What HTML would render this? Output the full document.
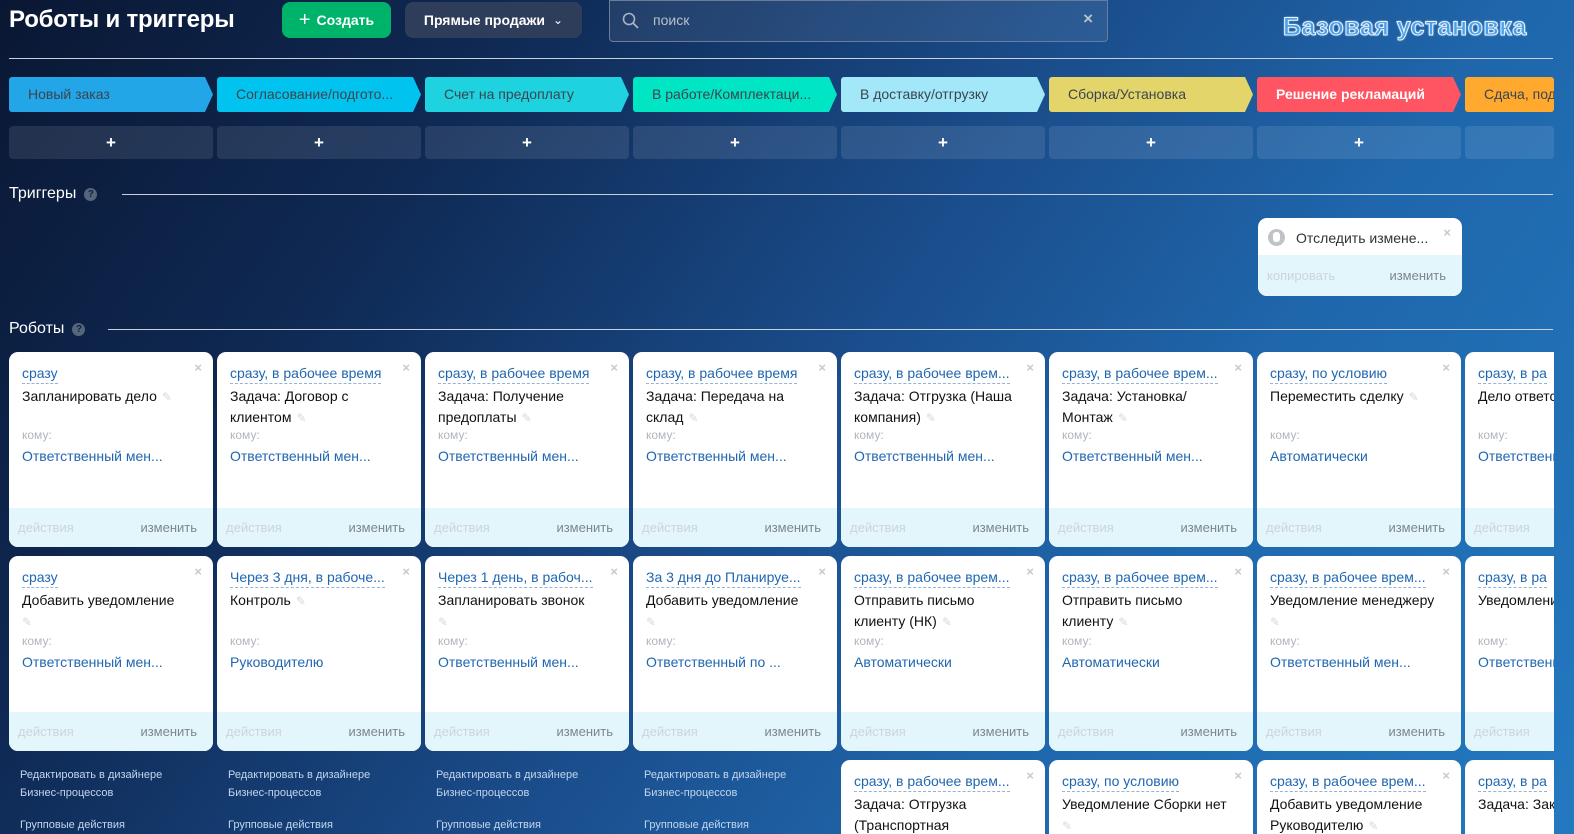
<!DOCTYPE html>
<html style="overflow:hidden"><head><meta charset="utf-8"><style>
*{box-sizing:border-box;margin:0;padding:0}
body{width:1574px;height:834px;overflow:hidden;font-family:"Liberation Sans","DejaVu Sans",sans-serif;background:linear-gradient(125deg,#0a1733 0%,#0f2a55 25%,#1a4c8a 50%,#1f66ab 70%,#2379c0 100%);position:relative}
.abs{position:absolute}
h1{position:absolute;left:9px;top:6px;font-size:24px;font-weight:bold;color:#fff;letter-spacing:-.2px}
.btn{position:absolute;top:2px;height:36px;border-radius:8px;color:#fff;font-size:14px;font-weight:bold;display:flex;align-items:center;justify-content:center}
.hline{position:absolute;height:1px;background:#c8d0da}
.stage{position:absolute;top:77px;height:35px;font-size:14px;color:#3c4450;padding-left:19px;line-height:35px;white-space:nowrap;overflow:hidden;border-radius:3px;clip-path:polygon(0 0,calc(100% - 8px) 0,100% 50%,calc(100% - 8px) 100%,0 100%)}
.plus{position:absolute;top:126px;width:204px;height:33px;border-radius:4px;background:rgba(255,255,255,.1);color:#fff;text-align:center;line-height:33px;font-size:17px;font-weight:bold}
.sec{position:absolute;left:9px;font-size:16px;color:#fff}
.q{display:inline-block;width:13px;height:13px;border-radius:50%;background:#55657a;color:#0e2248;font-size:10px;text-align:center;line-height:13px;font-weight:bold;vertical-align:1px;margin-left:8px}
.card{position:absolute;width:204px;height:195px;background:#fff;border-radius:9px;overflow:hidden;font-size:14px}
.card .t{position:absolute;left:13px;top:12px;color:#2067b0;border-bottom:1px dashed #8fb4dc;line-height:19px;white-space:nowrap;max-width:180px;overflow:hidden;text-overflow:ellipsis}
.card .x{position:absolute;right:11px;top:8px;color:#c5c9cd;font-size:13px;font-weight:bold}
.card .n{position:absolute;left:13px;top:34px;width:175px;color:#111;line-height:21px}
.pen{color:#d5d8db;font-size:12px;margin-left:5px}
.card .k{position:absolute;left:13px;top:76px;color:#b0b6bd;font-size:12px}
.card .r{position:absolute;left:13px;top:96px;color:#2067b0;white-space:nowrap}
.card .b{position:absolute;left:0;right:0;bottom:0;height:39px;background:#e3f6fb}
.card .d{position:absolute;left:9px;bottom:12px;color:#cdd4da;font-size:13px}
.card .c{position:absolute;right:16px;bottom:12px;color:#7d868f;font-size:13px}
.lnk{position:absolute;color:#c3d6ee;font-size:11px;line-height:18px}
</style></head><body>
<h1>Роботы и триггеры</h1>
<div class="btn" style="left:282px;width:109px;background:#00b36b"><span style="font-size:20px;font-weight:normal;margin-right:6px">+</span>Создать</div>
<div class="btn" style="left:405px;width:177px;background:#2e3d5a">Прямые продажи <span style="font-weight:normal;margin-left:8px;font-size:12px">&#8964;</span></div>
<div class="abs" style="left:609px;top:0;width:499px;height:42px;border:1px solid #6b7d96;border-radius:0 0 4px 4px;background:rgba(255,255,255,.08)">
<svg class="abs" style="left:12px;top:11px" width="18" height="18" viewBox="0 0 18 18"><circle cx="7" cy="7" r="5.5" fill="none" stroke="#a9b3c2" stroke-width="1.6"/><path d="M11 11l5 5" stroke="#a9b3c2" stroke-width="1.8"/></svg>
<span class="abs" style="left:43px;top:11px;color:#b8c0cc;font-size:14px">поиск</span>
<span class="abs" style="right:14px;top:8px;color:#b8c0cc;font-size:17px;font-weight:bold">×</span></div>
<div class="abs" style="left:1283px;top:13px;font-size:25px;font-weight:bold;color:#4aa1ea;letter-spacing:.5px;-webkit-text-stroke:1px #e8f4ff;text-shadow:0 0 2px #fff">Базовая установка</div>
<div class="hline" style="left:9px;top:58px;width:1544px"></div>

<div class="stage" style="left:9px;width:204px;background:#22a6e8">Новый заказ</div>
<div class="stage" style="left:217px;width:204px;background:#00c4ef">Согласование/подгото...</div>
<div class="stage" style="left:425px;width:204px;background:#1ed2df">Счет на предоплату</div>
<div class="stage" style="left:633px;width:204px;background:#00e5c4">В работе/Комплектаци...</div>
<div class="stage" style="left:841px;width:204px;background:#a2e8f8">В доставку/отгрузку</div>
<div class="stage" style="left:1049px;width:204px;background:#e3d56a">Сборка/Установка</div>
<div class="stage" style="left:1257px;width:204px;background:#ff5461;color:#fff;font-weight:bold">Решение рекламаций</div>
<div class="stage" style="left:1465px;width:89px;background:#ffa92f;clip-path:none">Сдача, под</div>

<div class="plus" style="left:9px">+</div><div class="plus" style="left:217px">+</div><div class="plus" style="left:425px">+</div><div class="plus" style="left:633px">+</div><div class="plus" style="left:841px">+</div><div class="plus" style="left:1049px">+</div><div class="plus" style="left:1257px">+</div><div class="plus" style="left:1465px;width:89px"></div>

<div class="sec" style="top:185px">Триггеры<span class="q">?</span></div>
<div class="hline" style="left:122px;top:194px;width:1431px"></div>
<div class="card" style="left:1258px;top:218px;height:78px">
<span class="abs" style="left:10px;top:11px;width:17px;height:17px;border-radius:50%;background:#bfc3c8"></span><span class="abs" style="left:15px;top:14px;width:7px;height:10px;border-radius:3px;background:#fff"></span>
<span class="abs" style="left:38px;top:12px;color:#333;font-size:14px">Отследить измене...</span><span class="x" style="top:7px">×</span>
<div class="b" style="height:41px"></div><span class="d" style="bottom:13px">копировать</span><span class="c" style="right:16px;bottom:13px">изменить</span></div>

<div class="sec" style="top:320px">Роботы<span class="q">?</span></div>
<div class="hline" style="left:108px;top:329px;width:1445px"></div>

<div style="position:absolute;left:0;top:0;width:1554px;height:834px;overflow:hidden">
<div class="card" style="left:9px;top:352px"><span class="t">сразу</span><span class="x">×</span><div class="n">Запланировать дело<span class="pen">✎</span></div><span class="k">кому:</span><span class="r">Ответственный мен...</span><div class="b"></div><span class="d">действия</span><span class="c">изменить</span></div>
<div class="card" style="left:217px;top:352px"><span class="t">сразу, в рабочее время</span><span class="x">×</span><div class="n">Задача: Договор с клиентом<span class="pen">✎</span></div><span class="k">кому:</span><span class="r">Ответственный мен...</span><div class="b"></div><span class="d">действия</span><span class="c">изменить</span></div>
<div class="card" style="left:425px;top:352px"><span class="t">сразу, в рабочее время</span><span class="x">×</span><div class="n">Задача: Получение предоплаты<span class="pen">✎</span></div><span class="k">кому:</span><span class="r">Ответственный мен...</span><div class="b"></div><span class="d">действия</span><span class="c">изменить</span></div>
<div class="card" style="left:633px;top:352px"><span class="t">сразу, в рабочее время</span><span class="x">×</span><div class="n">Задача: Передача на склад<span class="pen">✎</span></div><span class="k">кому:</span><span class="r">Ответственный мен...</span><div class="b"></div><span class="d">действия</span><span class="c">изменить</span></div>
<div class="card" style="left:841px;top:352px"><span class="t">сразу, в рабочее врем...</span><span class="x">×</span><div class="n">Задача: Отгрузка (Наша компания)<span class="pen">✎</span></div><span class="k">кому:</span><span class="r">Ответственный мен...</span><div class="b"></div><span class="d">действия</span><span class="c">изменить</span></div>
<div class="card" style="left:1049px;top:352px"><span class="t">сразу, в рабочее врем...</span><span class="x">×</span><div class="n">Задача: Установка/ Монтаж<span class="pen">✎</span></div><span class="k">кому:</span><span class="r">Ответственный мен...</span><div class="b"></div><span class="d">действия</span><span class="c">изменить</span></div>
<div class="card" style="left:1257px;top:352px"><span class="t">сразу, по условию</span><span class="x">×</span><div class="n">Переместить сделку<span class="pen">✎</span></div><span class="k">кому:</span><span class="r">Автоматически</span><div class="b"></div><span class="d">действия</span><span class="c">изменить</span></div>
<div class="card" style="left:1465px;top:352px"><span class="t">сразу, в ра</span><span class="x">×</span><div class="n">Дело ответственному</div><span class="k">кому:</span><span class="r">Ответственный</span><div class="b"></div><span class="d">действия</span><span class="c">изменить</span></div>

<div class="card" style="left:9px;top:556px"><span class="t">сразу</span><span class="x">×</span><div class="n">Добавить уведомление<br><span class="pen" style="margin:0">✎</span></div><span class="k" style="top:78px">кому:</span><span class="r" style="top:98px">Ответственный мен...</span><div class="b"></div><span class="d">действия</span><span class="c">изменить</span></div>
<div class="card" style="left:217px;top:556px"><span class="t">Через 3 дня, в рабоче...</span><span class="x">×</span><div class="n">Контроль<span class="pen">✎</span></div><span class="k" style="top:78px">кому:</span><span class="r" style="top:98px">Руководителю</span><div class="b"></div><span class="d">действия</span><span class="c">изменить</span></div>
<div class="card" style="left:425px;top:556px"><span class="t">Через 1 день, в рабоч...</span><span class="x">×</span><div class="n">Запланировать звонок<br><span class="pen" style="margin:0">✎</span></div><span class="k" style="top:78px">кому:</span><span class="r" style="top:98px">Ответственный мен...</span><div class="b"></div><span class="d">действия</span><span class="c">изменить</span></div>
<div class="card" style="left:633px;top:556px"><span class="t">За 3 дня до Планируе...</span><span class="x">×</span><div class="n">Добавить уведомление<br><span class="pen" style="margin:0">✎</span></div><span class="k" style="top:78px">кому:</span><span class="r" style="top:98px">Ответственный по ...</span><div class="b"></div><span class="d">действия</span><span class="c">изменить</span></div>
<div class="card" style="left:841px;top:556px"><span class="t">сразу, в рабочее врем...</span><span class="x">×</span><div class="n">Отправить письмо клиенту (НК)<span class="pen">✎</span></div><span class="k" style="top:78px">кому:</span><span class="r" style="top:98px">Автоматически</span><div class="b"></div><span class="d">действия</span><span class="c">изменить</span></div>
<div class="card" style="left:1049px;top:556px"><span class="t">сразу, в рабочее врем...</span><span class="x">×</span><div class="n">Отправить письмо клиенту<span class="pen">✎</span></div><span class="k" style="top:78px">кому:</span><span class="r" style="top:98px">Автоматически</span><div class="b"></div><span class="d">действия</span><span class="c">изменить</span></div>
<div class="card" style="left:1257px;top:556px"><span class="t">сразу, в рабочее врем...</span><span class="x">×</span><div class="n">Уведомление менеджеру<br><span class="pen" style="margin:0">✎</span></div><span class="k" style="top:78px">кому:</span><span class="r" style="top:98px">Ответственный мен...</span><div class="b"></div><span class="d">действия</span><span class="c">изменить</span></div>
<div class="card" style="left:1465px;top:556px"><span class="t">сразу, в ра</span><span class="x">×</span><div class="n">Уведомление оплаты</div><span class="k" style="top:78px">кому:</span><span class="r" style="top:98px">Ответственный</span><div class="b"></div><span class="d">действия</span><span class="c">изменить</span></div>

<div class="card" style="left:841px;top:760px;height:74px;border-radius:9px 9px 0 0"><span class="t">сразу, в рабочее врем...</span><span class="x">×</span><div class="n">Задача: Отгрузка (Транспортная</div></div>
<div class="card" style="left:1049px;top:760px;height:74px;border-radius:9px 9px 0 0"><span class="t">сразу, по условию</span><span class="x">×</span><div class="n">Уведомление Сборки нет<br><span class="pen" style="margin:0">✎</span></div></div>
<div class="card" style="left:1257px;top:760px;height:74px;border-radius:9px 9px 0 0"><span class="t">сразу, в рабочее врем...</span><span class="x">×</span><div class="n">Добавить уведомление Руководителю<span class="pen">✎</span></div></div>
<div class="card" style="left:1465px;top:760px;height:74px;border-radius:9px 9px 0 0"><span class="t">сразу, в ра</span><span class="x">×</span><div class="n">Задача: Заказ документы</div></div>
</div>

<div class="lnk" style="left:20px;top:766px">Редактировать в дизайнере<br>Бизнес-процессов</div><div class="lnk" style="left:20px;top:816px">Групповые действия</div>
<div class="lnk" style="left:228px;top:766px">Редактировать в дизайнере<br>Бизнес-процессов</div><div class="lnk" style="left:228px;top:816px">Групповые действия</div>
<div class="lnk" style="left:436px;top:766px">Редактировать в дизайнере<br>Бизнес-процессов</div><div class="lnk" style="left:436px;top:816px">Групповые действия</div>
<div class="lnk" style="left:644px;top:766px">Редактировать в дизайнере<br>Бизнес-процессов</div><div class="lnk" style="left:644px;top:816px">Групповые действия</div>
</body></html>
